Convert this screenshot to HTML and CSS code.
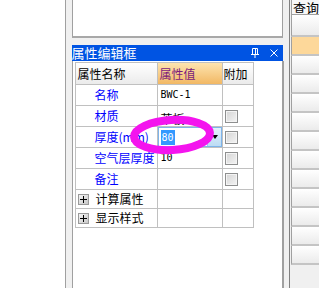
FILE: index.html
```html
<!DOCTYPE html>
<html lang="zh-CN">
<head>
    <meta charset="UTF-8">
    <title>属性编辑框</title>
    <link rel="stylesheet" href="styles.css">
</head>
<body>
    <div class="screen">
        <div class="blank"></div>
        <div class="splitter"></div>

        <!-- Property editor dock -->
        <div class="main">
            <div class="topbox"></div>
            <div class="gap"></div>
            <div class="titlebar">
                <span class="title">属性编辑框</span>
                <svg class="pin" width="8" height="10" viewBox="0 0 8 10">
                    <path d="M1.5 0.5h5v6h-5z M4.5 1v5 M0 6.5h8 M4 7v3" fill="none" stroke="#fff" stroke-width="1"/>
                </svg>
                <svg class="close" width="8" height="8" viewBox="0 0 8 8">
                    <path d="M0.5 0.5l7 7 M7.5 0.5l-7 7" fill="none" stroke="#fff" stroke-width="1"/>
                </svg>
            </div>
            <div class="content">
                <div class="grid">
                    <div class="row head">
                        <div class="cell h-name">属性名称</div>
                        <div class="cell h-value">属性值</div>
                        <div class="cell h-extra">附加</div>
                    </div>
                    <div class="row">
                        <div class="cell label">名称</div>
                        <div class="cell value mono">BWC-1</div>
                        <div class="cell"></div>
                    </div>
                    <div class="row">
                        <div class="cell label">材质</div>
                        <div class="cell value low">苯板</div>
                        <div class="cell"><span class="check"></span></div>
                    </div>
                    <div class="row">
                        <div class="cell label">厚度(mm)</div>
                        <div class="cell value edit">
                            <div class="combo">
                                <span class="sel mono">80</span>
                                <span class="drop"></span>
                            </div>
                        </div>
                        <div class="cell"><span class="check"></span></div>
                    </div>
                    <div class="row">
                        <div class="cell label">空气层厚度</div>
                        <div class="cell value mono">10</div>
                        <div class="cell"><span class="check"></span></div>
                    </div>
                    <div class="row">
                        <div class="cell label">备注</div>
                        <div class="cell value"></div>
                        <div class="cell"><span class="check"></span></div>
                    </div>
                    <div class="row group">
                        <div class="cell label"><span class="plus"></span>计算属性</div>
                        <div class="cell"></div>
                        <div class="cell"></div>
                    </div>
                    <div class="row group">
                        <div class="cell label"><span class="plus"></span>显示样式</div>
                        <div class="cell"></div>
                        <div class="cell"></div>
                    </div>
                </div>
            </div>
        </div>

        <div class="splitter2"></div>

        <!-- Query list on the right -->
        <div class="right">
            <div class="r-head">查询</div>
            <div class="r-row tall"></div>
            <div class="r-row hot"></div>
            <div class="r-row"></div>
            <div class="r-row"></div>
            <div class="r-row"></div>
            <div class="r-row"></div>
            <div class="r-row"></div>
            <div class="r-row"></div>
            <div class="r-row"></div>
            <div class="r-row"></div>
            <div class="r-row"></div>
            <div class="r-row"></div>
            <div class="r-row"></div>
        </div>
    </div>

    <!-- Magenta marker drawn over the thickness field -->
    <svg class="ring" width="100" height="50" viewBox="0 0 100 50">
        <ellipse cx="44" cy="24" rx="38" ry="15" fill="none" stroke="#f414ee" stroke-width="8" transform="rotate(-3 44 24)"/>
    </svg>
</body>
</html>
```

FILE: styles.css
```css
* {
    margin: 0;
    padding: 0;
    box-sizing: border-box;
}

html, body {
    width: 319px;
    height: 288px;
    overflow: hidden;
    background: #f0f0f0;
    font-family: "Noto Sans CJK SC", "DejaVu Sans", sans-serif;
    font-size: 12px;
    color: #000;
}

.screen {
    display: flex;
    height: 288px;
}

.blank {
    width: 66px;
    background: #fff;
}

.splitter {
    width: 7px;
    border-left: 1px solid #a0a0a0;
    background: #f0f0f0;
}

.main {
    width: 217px;
    display: flex;
    flex-direction: column;
}

.topbox {
    height: 38px;
    background: #fff;
    border-left: 1px solid #a0a0a0;
    border-right: 1px solid #a0a0a0;
    border-bottom: 2px solid #a8a8a8;
    margin-right: 1px;
}

.gap {
    height: 7px;
}

.titlebar {
    height: 16px;
    background: #0054e3;
    color: #fff;
    display: flex;
    align-items: center;
    margin-right: 1px;
    font-size: 13px;
    line-height: 16px;
}

.title {
    flex: 1;
}

.pin {
    margin-right: 11px;
}

.close {
    margin-right: 5px;
}

.content {
    flex: 1;
    background: #fff;
    border-left: 1px solid #a0a0a0;
    border-right: 2px solid #a0a0a0;
    padding: 1px 0 0 2px;
}

.grid {
    width: 179px;
    border-left: 1px solid #c0c0c0;
    border-top: 1px solid #c0c0c0;
}

.row {
    display: grid;
    grid-template-columns: 82px 65px 31px;
    height: 21px;
}

.row.head {
    height: 22px;
}

.row.group {
    height: 19px;
}

.cell {
    border-right: 1px solid #c0c0c0;
    border-bottom: 1px solid #c0c0c0;
    display: flex;
    align-items: center;
    line-height: 14px;
    white-space: nowrap;
    overflow: hidden;
}

.head .cell {
    padding-left: 2px;
    background: linear-gradient(#ffffff, #ebebeb);
}

.head .h-value {
    background: linear-gradient(#fde4b0, #f2b864);
    color: #7c1a7c;
    padding-left: 2px;
}

.head .h-extra {
    padding-left: 1px;
}

.label {
    padding-left: 19px;
    color: #0000ff;
}

.group .label {
    padding-left: 2px;
    color: #000;
}

.value {
    padding-left: 3px;
}

.value.low {
    padding-top: 5px;
}

.mono {
    font-family: "DejaVu Sans Mono", "Liberation Mono", monospace;
    font-size: 10px;
}

.edit {
    padding: 0;
}

.combo {
    width: 64px;
    height: 20px;
    border: 1px solid #7eb4ea;
    display: flex;
    align-items: center;
    padding-left: 2px;
}

.sel {
    background: #3399ff;
    color: #fff;
    padding: 0 1px;
    height: 15px;
    line-height: 15px;
    margin-right: auto;
}

.drop {
    width: 14px;
    height: 18px;
    background: linear-gradient(#e4f1fc, #bcdcf4);
    border-left: 1px solid #9cc8ee;
    position: relative;
}

.drop::after {
    content: "";
    position: absolute;
    left: 4px;
    top: 7px;
    border-left: 3px solid transparent;
    border-right: 3px solid transparent;
    border-top: 4px solid #000;
}

.check {
    width: 13px;
    height: 13px;
    margin-left: 2px;
    border: 1px solid #8e8f8f;
    background: linear-gradient(135deg, #d4d4d4, #f4f4f4);
    box-shadow: inset 0 0 0 1px #f4f4f4;
}

.plus {
    width: 11px;
    height: 11px;
    margin-right: 7px;
    background: linear-gradient(135deg, #f4f4f4, #c8c8c8);
    border: 1px solid #9a9a9a;
    position: relative;
}

.plus::before,
.plus::after {
    content: "";
    position: absolute;
    background: #000;
}

.plus::before {
    left: 1px;
    top: 4px;
    width: 7px;
    height: 1px;
}

.plus::after {
    left: 4px;
    top: 1px;
    width: 1px;
    height: 7px;
}

.splitter2 {
    width: 6px;
    border-right: 1px solid #808080;
    background: #f0f0f0;
}

.right {
    flex: 1;
    padding-left: 1px;
    background: #f0f0f0;
}

.r-head {
    height: 15px;
    line-height: 15px;
    border-left: 1px solid #a0a0a0;
    border-bottom: 1px solid #a0a0a0;
    background: #f7f7f7;
    padding-left: 1px;
    font-size: 13px;
    white-space: nowrap;
    overflow: hidden;
}

.r-row {
    height: 19px;
    border-left: 1px solid #a0a0a0;
    border-bottom: 2px solid #c4c4c4;
    background: linear-gradient(#ffffff, #ebebeb);
}

.r-row.tall {
    height: 22px;
}

.r-row.hot {
    background: #fdd89a;
}

.ring {
    position: absolute;
    left: 128px;
    top: 111px;
}
```
